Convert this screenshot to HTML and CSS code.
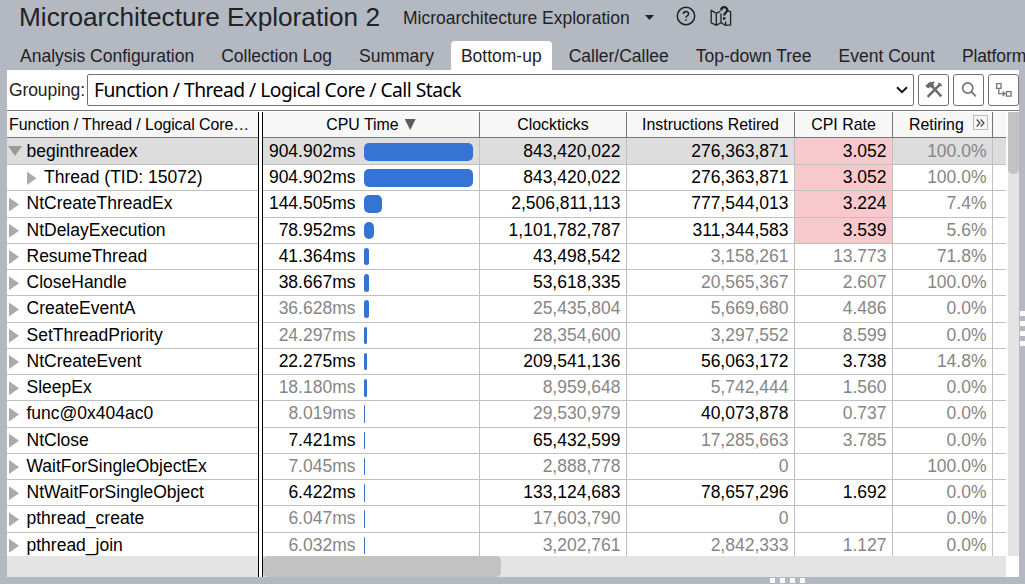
FILE: index.html
```
<!DOCTYPE html>
<html lang="en">
<head>
<meta charset="utf-8">
<title>Microarchitecture Exploration</title>
<link rel="stylesheet" href="styles.css">
</head>
<body>
<header class="top">
  <h1 class="title">Microarchitecture Exploration 2</h1>
  <span class="subtitle">Microarchitecture Exploration</span>
  <span class="caret"></span>
  <svg class="help" width="20" height="20" viewBox="0 0 20 20" fill="none" stroke="#1f2226" stroke-width="1.5"><circle cx="10" cy="10" r="8.7"/><path d="M7.4 8.1C7.4 4.8 12.6 4.8 12.6 7.9C12.6 9.7 10 9.8 10 11.7M10 13.2v1.6"/></svg>
  <svg class="map" width="22" height="22" viewBox="0 0 22 22" fill="none" stroke="#1f2226" stroke-width="1.3"><path d="M10.3 6.4L6.3 8.3L1.2 5.4V17.8L6.3 20.3L11 17.8L15.6 20.3L20.6 20V7L18 5.6M6.3 8.3V20.3M11 8.5V17.8M15.6 16.6V20.3"/><path d="M11.2 5.4C11.2 1.2 17.2 1.2 17.2 4.9C17.2 7.5 14.2 7.6 14.2 10.4" stroke-width="2.3"/><path d="M14.2 12.2v2.5" stroke-width="2.5"/></svg>
</header>
<nav class="tabs">
  <span class="tab">Analysis Configuration</span>
  <span class="tab">Collection Log</span>
  <span class="tab">Summary</span>
  <span class="tab active">Bottom-up</span>
  <span class="tab">Caller/Callee</span>
  <span class="tab">Top-down Tree</span>
  <span class="tab">Event Count</span>
  <span class="tab">Platform</span>
</nav>
<main class="panel">
  <div class="toolbar">
    <span class="label">Grouping:</span>
    <div class="select"><span>Function / Thread / Logical Core / Call Stack</span>
      <svg width="12" height="8" viewBox="0 0 12 8" fill="none" stroke="#111" stroke-width="2"><path d="M1 1.2L6 6.2L11 1.2"/></svg></div>
    <button class="tool"><svg width="20" height="20" viewBox="0 0 20 20"><path d="M1.2 6L5.2 2.3L11.2 1.6L9.2 4.3L10.4 5.9L7.9 8.2L6.4 6.8L4.4 8.6Z" fill="#6b6b6b"/><path d="M8.2 6.5L17.3 16.4M16.8 3.7L3.6 16.8" stroke="#6b6b6b" stroke-width="2.5" fill="none"/><path d="M14.8 2.6L15.3 5.2L18 5.7" stroke="#6b6b6b" stroke-width="1.3" fill="none"/></svg></button>
    <button class="tool"><svg width="18" height="18" viewBox="0 0 18 18" fill="none" stroke="#757575" stroke-width="1.7"><circle cx="7.7" cy="7" r="5.1"/><path d="M11.4 10.8L16 15.3"/></svg></button>
    <button class="tool last"><svg width="18" height="18" viewBox="0 0 18 18" fill="none" stroke="#757575" stroke-width="1.3"><path d="M1.6 2.6h4.4v4.8h-4.4zM11.5 10.6h4.6v4.6h-4.6zM3.8 8V12.7H10M7.6 10.5L10 12.7L7.6 14.9"/></svg></button>
  </div>
  <div class="content">
    <div class="grid">
      <div class="row head"><div class="name">Function / Thread / Logical Core…</div><i></i><div class="time">CPU Time<b class="sort"></b></div><div>Clockticks</div><div>Instructions Retired</div><div>CPI Rate</div><div class="retire">Retiring<span class="expand"><svg width="9" height="8" viewBox="0 0 9 8" fill="none" stroke="#444" stroke-width="1.2"><path d="M.7.5L4 4L.7 7.5M4.7.5L8 4L4.7 7.5"/></svg></span></div><div class="end"></div></div>
      <div class="body">
        <div class="row selected"><div class="name"><b class="open"></b>beginthreadex</div><i></i><div class="time">904.902ms<u style="width:109px"></u></div><div>843,420,022</div><div>276,363,871</div><div class="hot">3.052</div><div class="dim">100.0%</div><div class="end"></div></div>
        <div class="row"><div class="name child"><b></b>Thread (TID: 15072)</div><i></i><div class="time">904.902ms<u style="width:109px"></u></div><div>843,420,022</div><div>276,363,871</div><div class="hot">3.052</div><div class="dim">100.0%</div><div class="end"></div></div>
        <div class="row"><div class="name"><b></b>NtCreateThreadEx</div><i></i><div class="time">144.505ms<u style="width:18px"></u></div><div>2,506,811,113</div><div>777,544,013</div><div class="hot">3.224</div><div class="dim">7.4%</div><div class="end"></div></div>
        <div class="row"><div class="name"><b></b>NtDelayExecution</div><i></i><div class="time">78.952ms<u style="width:10px"></u></div><div>1,101,782,787</div><div>311,344,583</div><div class="hot">3.539</div><div class="dim">5.6%</div><div class="end"></div></div>
        <div class="row"><div class="name"><b></b>ResumeThread</div><i></i><div class="time">41.364ms<u style="width:5px"></u></div><div>43,498,542</div><div class="dim">3,158,261</div><div class="dim">13.773</div><div class="dim">71.8%</div><div class="end"></div></div>
        <div class="row"><div class="name"><b></b>CloseHandle</div><i></i><div class="time">38.667ms<u style="width:5px"></u></div><div>53,618,335</div><div class="dim">20,565,367</div><div class="dim">2.607</div><div class="dim">100.0%</div><div class="end"></div></div>
        <div class="row"><div class="name"><b></b>CreateEventA</div><i></i><div class="time dim">36.628ms<u style="width:5px"></u></div><div class="dim">25,435,804</div><div class="dim">5,669,680</div><div class="dim">4.486</div><div class="dim">0.0%</div><div class="end"></div></div>
        <div class="row"><div class="name"><b></b>SetThreadPriority</div><i></i><div class="time dim">24.297ms<u style="width:3px"></u></div><div class="dim">28,354,600</div><div class="dim">3,297,552</div><div class="dim">8.599</div><div class="dim">0.0%</div><div class="end"></div></div>
        <div class="row"><div class="name"><b></b>NtCreateEvent</div><i></i><div class="time">22.275ms<u style="width:3px"></u></div><div>209,541,136</div><div>56,063,172</div><div>3.738</div><div class="dim">14.8%</div><div class="end"></div></div>
        <div class="row"><div class="name"><b></b>SleepEx</div><i></i><div class="time dim">18.180ms<u style="width:3px"></u></div><div class="dim">8,959,648</div><div class="dim">5,742,444</div><div class="dim">1.560</div><div class="dim">0.0%</div><div class="end"></div></div>
        <div class="row"><div class="name"><b></b>func@0x404ac0</div><i></i><div class="time dim">8.019ms<u style="width:1px"></u></div><div class="dim">29,530,979</div><div>40,073,878</div><div class="dim">0.737</div><div class="dim">0.0%</div><div class="end"></div></div>
        <div class="row"><div class="name"><b></b>NtClose</div><i></i><div class="time">7.421ms<u style="width:1px"></u></div><div>65,432,599</div><div class="dim">17,285,663</div><div class="dim">3.785</div><div class="dim">0.0%</div><div class="end"></div></div>
        <div class="row"><div class="name"><b></b>WaitForSingleObjectEx</div><i></i><div class="time dim">7.045ms<u style="width:1px"></u></div><div class="dim">2,888,778</div><div class="dim">0</div><div></div><div class="dim">100.0%</div><div class="end"></div></div>
        <div class="row"><div class="name"><b></b>NtWaitForSingleObject</div><i></i><div class="time">6.422ms<u style="width:1px"></u></div><div>133,124,683</div><div>78,657,296</div><div>1.692</div><div class="dim">0.0%</div><div class="end"></div></div>
        <div class="row"><div class="name"><b></b>pthread_create</div><i></i><div class="time dim">6.047ms<u style="width:1px"></u></div><div class="dim">17,603,790</div><div class="dim">0</div><div></div><div class="dim">0.0%</div><div class="end"></div></div>
        <div class="row"><div class="name"><b></b>pthread_join</div><i></i><div class="time dim">6.032ms<u style="width:1px"></u></div><div class="dim">3,202,761</div><div class="dim">2,842,333</div><div class="dim">1.127</div><div class="dim">0.0%</div><div class="end"></div></div>
      </div>
      <div class="hscroll"><div class="left-track"></div><i></i><div class="track"><div class="thumb"></div></div></div>
    </div>
    <div class="vscroll"><div class="thumb"></div></div>
  </div>
</main>
<div class="grip right"><s></s><s></s><s></s><s></s></div>
<div class="grip bottom"><s></s><s></s><s></s><s></s></div>
</body>
</html>
```
FILE: styles.css
```
* { box-sizing: border-box; }
body {
  margin: 0;
  width: 1025px;
  height: 584px;
  overflow: hidden;
  position: relative;
  background: #b4b8c0;
  color: #1f2226;
  font: 17.5px/20px "Liberation Sans", Arial, sans-serif;
  white-space: nowrap;
}
.top { display: flex; height: 41px; padding-left: 19px; }
.title { margin: 2px 0 0; width: 384px; font-size: 26.2px; line-height: 30px; font-weight: 400; }
.subtitle { width: 242px; margin-top: 8px; }
.caret { margin-top: 15px; width: 9px; height: 5px; background: #1f2226; clip-path: polygon(0 0, 100% 0, 50% 100%); }
.help { margin: 6px 0 0 22px; }
.map { margin: 5px 0 0 14px; }
.tabs { display: flex; height: 29px; padding-left: 10px; gap: 7px; }
.tab { flex: none; height: 29px; padding: 5px 10px 0; }
.active { background: #fff; border-radius: 4px 4px 0 0; }
.tab:last-child { letter-spacing: -0.12px; padding-right: 0; }

.panel { width: 1012px; height: 507px; margin-left: 7px; background: #fff; }
.toolbar { display: flex; height: 41px; padding: 4px 0 0 2px; border-bottom: 1px solid #777; }
.label { width: 78px; padding-top: 6px; letter-spacing: -0.1px; }
.select {
  display: flex; align-items: center; justify-content: space-between;
  width: 827px; height: 32px; margin-right: 4px; padding: 0 5px 0 6px;
  border: 1px solid #707070; border-radius: 2px;
  color: #000; font: 19.3px/28px "Noto Sans", sans-serif; letter-spacing: -0.53px;
}
.tool {
  display: flex; align-items: center; justify-content: center; flex: none;
  width: 31px; height: 32px; margin-right: 4px; padding: 0;
  border: 1px solid #707070; border-radius: 3px; background: #fff;
}
.tool svg { margin-top: -1px; }
.last { margin-right: 0; }

.content { display: flex; height: 466px; padding-top: 1px; color: #000; }
.grid { width: 999px; }
.row, .hscroll { display: grid; grid-template-columns: 251px 5px 217px 147px 168px 98px 100px 13px; }
.row > i, .hscroll > i { border: solid #000; border-width: 0 1px; background: #fff; }
.row { height: 26.25px; }
.row > div {
  display: flex; justify-content: flex-end; align-items: flex-start;
  padding: 2px 5.5px 0 0; overflow: hidden;
  border: solid #c0c0c0; border-width: 0 1px 1px 0;
}
.row > .name { justify-content: flex-start; padding: 2px 0 0 2px; border-right: 0; }
.row > .end { border-right: 0; }
.row.head { height: 26px; font-size: 15.9px; }
.row.head > div { justify-content: center; padding: 3px 0 0; background: #f7f7f7; border-color: #777; }
.row.head > .name { justify-content: flex-start; padding-left: 2px; letter-spacing: -0.08px; }
.sort { width: 11px; height: 11px; margin: 4px 0 0 6px; background: #5c5c5c; clip-path: polygon(0 0, 100% 0, 50% 100%); }
.row.head > .retire { justify-content: flex-start; padding: 3px 0 0 16px; }
.expand { display: flex; align-items: center; justify-content: center; width: 15px; height: 15px; margin-left: 9px; border: 1px solid #bbb; }

.body { height: 418px; overflow: hidden; }
.body .row:first-child { height: 27.15px; }
.body .row:first-child > div { padding-top: 3px; }
.name b { flex: none; width: 10px; height: 14px; margin: 4px 7.5px 0 0; background: #aaa; clip-path: polygon(0 0, 100% 50%, 0 100%); }
.name b.open { width: 14px; height: 10px; margin: 5px 4.5px 0 -1px; background: #999; clip-path: polygon(0 0, 100% 0, 50% 100%); }
.row > .child { padding-left: 19.5px; }
.body .row > .time { display: grid; grid-template-columns: 92.5px 109px; column-gap: 8.5px; justify-content: start; justify-items: end; padding-right: 0; }
.time u { justify-self: start; height: 17.5px; margin-top: 2px; border-radius: 5px; background: #3574d4; }
.row.selected > div { background: #ddd; }
.row.selected > .hot, .row > .hot { background: #f7c9cc; }
.dim { color: #868686; }

.hscroll { height: 21px; grid-template-columns: 251px 5px 743px; }
.left-track, .track { background: #e4e4e4; }
.hscroll .thumb { width: 238px; height: 21px; background: #c2c2c2; border-radius: 5px; }
.vscroll { width: 11px; height: 444px; margin-left: 2px; background: #e4e4e4; }
.vscroll .thumb { height: 62px; background: #c2c2c2; border-radius: 0 0 5px 5px; }

.grip { position: absolute; display: flex; gap: 5px; }
.grip s { width: 5px; height: 5px; background: #fff; }
.right { left: 1020px; top: 311px; flex-direction: column; }
.bottom { left: 770px; top: 578px; }
```
